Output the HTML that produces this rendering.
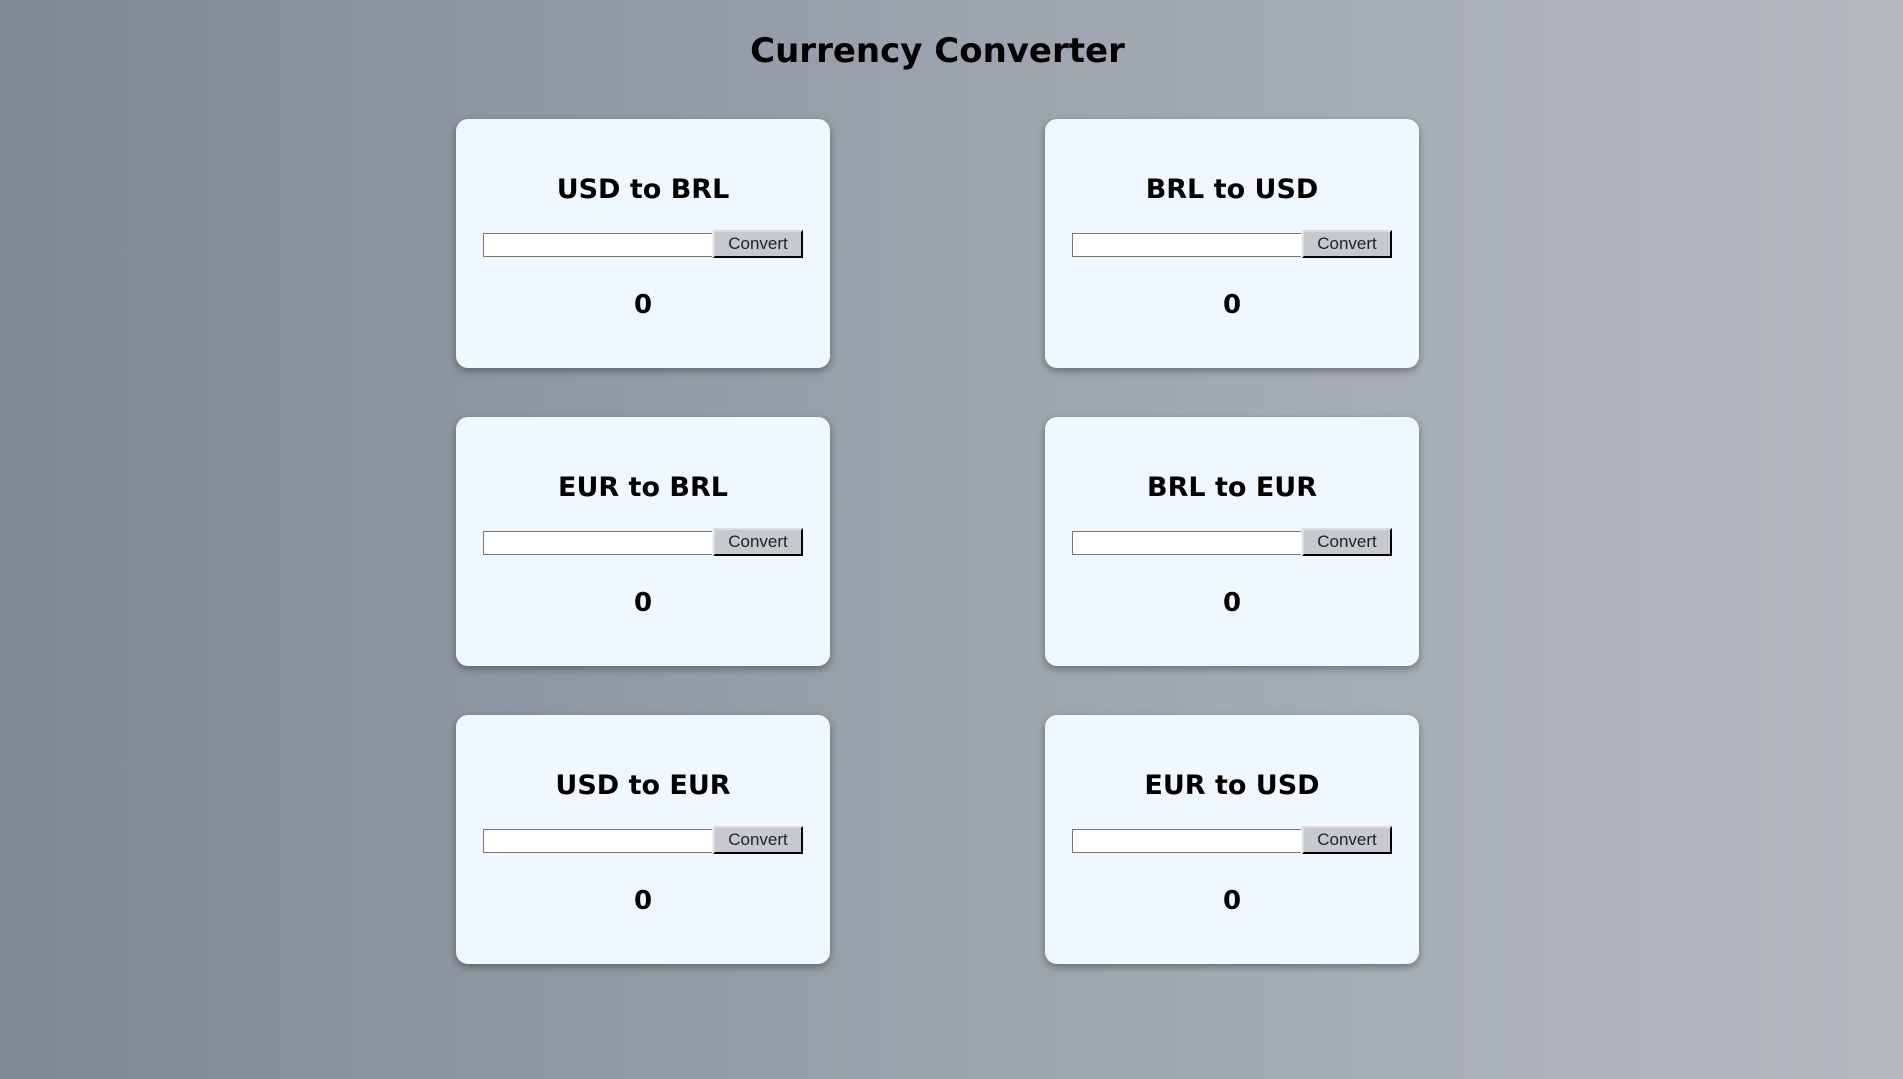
<!DOCTYPE html>
<html><head><style>
html,body{margin:0;height:1079px;width:1903px;overflow:hidden}
body{background:linear-gradient(to right,#7f8995,#9ba3ad 50%,#b6babf);font-family:"DejaVu Sans","Liberation Sans",sans-serif;position:relative}
h1{position:absolute;top:31px;left:0;width:1875px;text-align:center;margin:0;font-size:34px;font-weight:bold;color:#000}
.card{position:absolute;width:374px;height:249px;background:#f0f8ff;border-radius:12px;box-shadow:0 3px 8px rgba(0,0,0,.35);text-align:center}
.card h2{position:absolute;top:55px;left:0;right:0;margin:0;font-size:27px;font-weight:bold;color:#000}
.inp{position:absolute;left:27px;top:114px;width:228px;height:22px;background:#fff;border:1px solid #777;border-right:none}
.btn{position:absolute;left:257px;top:111px;width:86px;height:24px;background:#c6c9cd;border:2px outset #444;border-color:#ddd #333 #333 #ddd;font-family:"Liberation Sans",sans-serif;font-size:17px;line-height:24px;color:#222;box-sizing:content-box}
.res{position:absolute;top:171px;left:0;right:0;font-size:26px;font-weight:bold;color:#000}
</style></head><body>
<h1>Currency Converter</h1>
<div class="card" style="left:456px;top:119px"><h2>USD to BRL</h2><div class="inp"></div><div class="btn">Convert</div><div class="res">0</div></div>
<div class="card" style="left:1045px;top:119px"><h2>BRL to USD</h2><div class="inp"></div><div class="btn">Convert</div><div class="res">0</div></div>
<div class="card" style="left:456px;top:417px"><h2>EUR to BRL</h2><div class="inp"></div><div class="btn">Convert</div><div class="res">0</div></div>
<div class="card" style="left:1045px;top:417px"><h2>BRL to EUR</h2><div class="inp"></div><div class="btn">Convert</div><div class="res">0</div></div>
<div class="card" style="left:456px;top:715px"><h2>USD to EUR</h2><div class="inp"></div><div class="btn">Convert</div><div class="res">0</div></div>
<div class="card" style="left:1045px;top:715px"><h2>EUR to USD</h2><div class="inp"></div><div class="btn">Convert</div><div class="res">0</div></div>
</body></html>
